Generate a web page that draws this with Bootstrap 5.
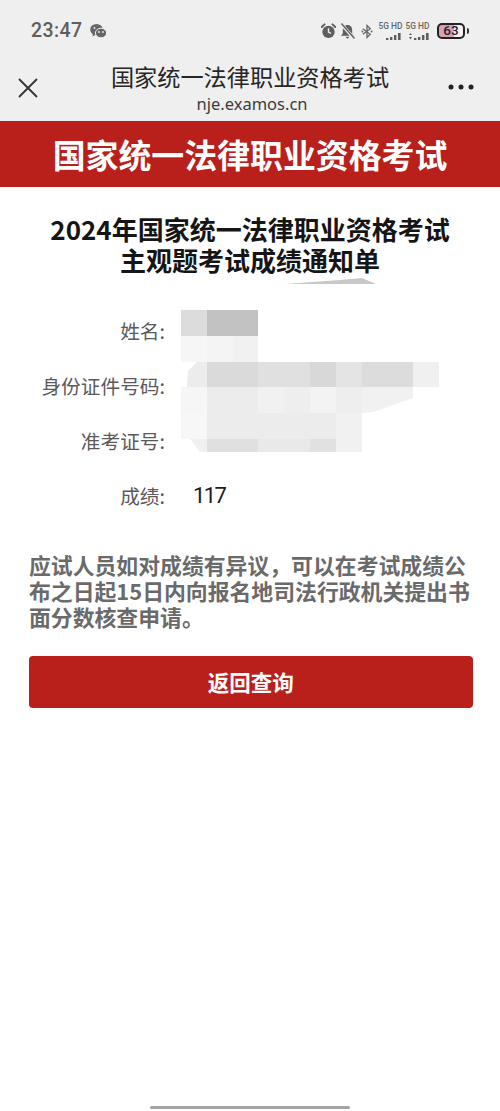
<!DOCTYPE html>
<html lang="zh-CN">
<head>
<meta charset="utf-8">
<title>国家统一法律职业资格考试</title>
<link rel="stylesheet" href="https://cdn.jsdelivr.net/npm/bootstrap@5.3.0/dist/css/bootstrap.min.css">
<style>
html,body{height:100%;}
body{width:500px;height:1111px;overflow:hidden;background:#fff;font-family:"Noto Sans CJK SC","Noto Sans",sans-serif;color:#222;}
.phone{height:1111px;}
.chrome-bg{background:#efefef;height:121px;}
.status-row{height:62px;padding:0 31px 0 31px;color:#5e5e5e;}
.clock{font-family:Roboto,sans-serif;font-size:19.5px;font-weight:500;letter-spacing:.4px;line-height:1;}
.ic-alarm{margin-right:4px;}
.ic-bt{margin-left:6px;}
.sig-label{font-family:Roboto,sans-serif;font-size:8.4px;font-weight:500;line-height:1;white-space:nowrap;color:#666;margin-bottom:3px;}
.sig-wrap{width:23px;}
.sig-first{margin-left:6px;}
.sig-next{margin-left:4px;}
.batt-wrap{margin-left:8px;}
.batt{width:28px;height:16px;border:2px solid #222;border-radius:5px;background:linear-gradient(90deg,#dd9fb2 62%,#f6eef0 62%);font-family:Roboto,sans-serif;font-size:13.5px;font-weight:500;line-height:1;color:#222;}
.batt-tip{width:2px;height:6px;background:#333;border-radius:0 2px 2px 0;margin-left:2px;}
.nav-row{height:59px;padding:0 26px 0 18px;}
.close-slot{width:34px;padding-top:16px;}
.title-one{font-size:23.2px;line-height:28px;color:#262626;}
.title-two{font-family:"Noto Sans",sans-serif;font-size:16.5px;line-height:22px;color:#3c3c3c;margin-top:3px;padding-left:4px;}
.dots-slot{width:26px;padding-top:22px;}
.banner{height:66px;background:#b9201c;color:#fff;font-size:32.9px;font-weight:700;letter-spacing:0;line-height:1;}
.doc-title{margin:26px 0 0;font-size:26px;line-height:31px;font-weight:700;color:#151515;}
.doc-title span{display:block;}
.fields{position:relative;margin-top:28px;height:220px;}
.field-row{height:55px;}
.field-label{width:165px;text-align:right;font-size:19.7px;color:#5a5a5a;line-height:1;flex:none;}
.field-value{margin-left:28px;font-family:Roboto,sans-serif;font-size:22px;letter-spacing:-1.6px;color:#1c1c1c;line-height:1;}
.mosaic{position:absolute;left:0;top:-32px;}
.notice{margin:29px 28px 0 29px;font-size:21.85px;line-height:26px;font-weight:700;color:#6a6a6a;}
.query-btn{display:block;margin:26px 27.5px 0 29px;height:52px;width:443.5px;padding:0;background:#b9201c;border:0;border-radius:4px;color:#fff;font-size:21.5px;font-weight:700;line-height:52px;}
.home-bar{position:absolute;left:150px;top:1106px;width:200px;height:3px;border-radius:2px;background:#a3a3a3;}
</style>
</head>
<body>
<div class="phone position-relative">
  <header class="chrome-bg">
    <div class="status-row d-flex align-items-center justify-content-between">
      <div class="d-flex align-items-center gap-2">
        <span class="clock">23:47</span>
        <svg width="17" height="16" viewBox="0 0 17 16"><ellipse cx="6.5" cy="6.5" rx="6.3" ry="5.5" fill="#666"/><path d="M3 10.5 2.5 13.5 6 11.5z" fill="#666"/><ellipse cx="11" cy="10" rx="5.6" ry="4.8" fill="#666" stroke="#efefef" stroke-width="1"/><circle cx="9" cy="9" r=".9" fill="#efefef"/><circle cx="13" cy="9" r=".9" fill="#efefef"/><circle cx="4.5" cy="5" r=".9" fill="#efefef"/></svg>
      </div>
      <div class="d-flex align-items-center">
        <svg class="ic-alarm" width="15" height="16" viewBox="0 0 17 17"><circle cx="8.5" cy="9.5" r="7" fill="#5e5e5e"/><path d="M8.5 5.500v4.300l2.800 1.400" stroke="#efefef" stroke-width="1.600" fill="none"/><path d="M.8 4 4 1M16.200 4 13 1" stroke="#5e5e5e" stroke-width="2.200" stroke-linecap="round"/></svg>
        <svg width="15" height="17" viewBox="0 0 16 17"><path d="M8 1.500c3.300 0 5 2.500 5 5.500v3.500l2 2.500H1l2-2.500V7c0-3 1.700-5.500 5-5.500z" fill="#5e5e5e"/><path d="M6 14.200h4L8 16.500z" fill="#5e5e5e"/><path d="M1 0 15 16" stroke="#efefef" stroke-width="3.500"/><path d="M1.500 0 15.500 16" stroke="#5e5e5e" stroke-width="1.500"/></svg>
        <svg class="ic-bt" width="12" height="15" viewBox="0 0 13 15"><path d="M2 4.500 10 10.500 6.500 14V1L10 4.500 2 10.500" stroke="#666" stroke-width="1.400" fill="none"/><circle cx="1.500" cy="7.500" r="1" fill="#666"/><circle cx="11.500" cy="7.500" r="1" fill="#666"/></svg>
        <div class="sig-wrap sig-first d-flex flex-column align-items-center">
          <span class="sig-label">5G HD</span>
          <svg width="22" height="7" viewBox="0 0 22 7"><path d="M6 5h2.400v2H6zM10 4h2.400v3H10zM14 2h2.400v5H14zM18 0h2.600v7H18z" fill="#5e5e5e"/></svg>
        </div>
        <div class="sig-wrap sig-next d-flex flex-column align-items-center">
          <span class="sig-label">5G HD</span>
          <svg width="22" height="7" viewBox="0 0 22 7"><path d="M2 2l1.500-2 1.500 2zM2 4l1.500 2.500L5 4zM7 5h2.400v2H7zM11 4h2.400v3H11zM15 2h2.400v5H15zM19 0h2.600v7H19z" fill="#5e5e5e"/></svg>
        </div>
        <div class="batt-wrap d-flex align-items-center">
          <div class="batt d-flex align-items-center justify-content-center">63</div>
          <div class="batt-tip"></div>
        </div>
      </div>
    </div>
    <div class="nav-row d-flex align-items-start justify-content-between">
      <div class="close-slot">
        <svg class="d-block" width="20" height="20" viewBox="0 0 20 20"><path d="M1 1 19 19M19 1 1 19" stroke="#333" stroke-width="1.800" fill="none"/></svg>
      </div>
      <div class="text-center">
        <div class="title-one">国家统一法律职业资格考试</div>
        <div class="title-two">nje.examos.cn</div>
      </div>
      <div class="dots-slot">
        <svg class="d-block" width="26" height="6" viewBox="0 0 26 6"><circle cx="3" cy="3" r="2.500" fill="#222"/><circle cx="13" cy="3" r="2.500" fill="#222"/><circle cx="23" cy="3" r="2.500" fill="#222"/></svg>
      </div>
    </div>
  </header>
  <div class="banner d-flex align-items-center justify-content-center">国家统一法律职业资格考试</div>
  <h1 class="doc-title text-center"><span>2024年国家统一法律职业资格考试</span><span>主观题考试成绩通知单</span></h1>
  <section class="fields">
    <div class="field-row d-flex align-items-center"><div class="field-label">姓名:</div></div>
    <div class="field-row d-flex align-items-center"><div class="field-label">身份证件号码:</div></div>
    <div class="field-row d-flex align-items-center"><div class="field-label">准考证号:</div></div>
    <div class="field-row d-flex align-items-center"><div class="field-label">成绩:</div><div class="field-value">117</div></div>
    <svg class="mosaic" width="500" height="200" viewBox="0 0 500 200">
      <g transform="translate(0,-271)">
        <path d="M285 284 340 280 362 278 376 284z" fill="#c8c8c8"/>
        <rect x="181" y="310" width="26" height="26" fill="#dcdcdc"/>
        <rect x="207" y="310" width="51" height="26" fill="#c2c2c2"/>
        <rect x="181" y="336" width="26" height="26" fill="#f6f6f6"/>
        <rect x="207" y="336" width="26" height="26" fill="#f4f4f4"/>
        <rect x="233" y="336" width="25" height="26" fill="#f1f1f1"/>
        <path d="M188 371 197 362H207V387H187z" fill="#ececec"/>
        <rect x="207" y="362" width="51" height="25" fill="#dadada"/>
        <rect x="258" y="362" width="52" height="25" fill="#e0e0e0"/>
        <rect x="310" y="362" width="26" height="25" fill="#d8d8d8"/>
        <rect x="336" y="362" width="26" height="25" fill="#e4e4e4"/>
        <rect x="362" y="362" width="51" height="25" fill="#dcdcdc"/>
        <rect x="413" y="362" width="26" height="25" fill="#f0f0f0"/>
        <path d="M181 387H207V413H181z" fill="#f6f6f6"/>
        <rect x="207" y="387" width="51" height="26" fill="#ececec"/>
        <rect x="258" y="387" width="26" height="26" fill="#f1f1f1"/>
        <rect x="284" y="387" width="26" height="26" fill="#eeeeee"/>
        <rect x="310" y="387" width="26" height="26" fill="#f3f3f3"/>
        <rect x="336" y="387" width="26" height="26" fill="#eeeeee"/>
        <path d="M362 387H413V398L373 412 362 413z" fill="#f1f1f1"/>
        <rect x="181" y="413" width="26" height="26" fill="#f7f7f7"/>
        <rect x="207" y="413" width="129" height="26" fill="#ececec"/>
        <rect x="336" y="413" width="26" height="26" fill="#f1f1f1"/>
        <path d="M190 439H207V452H200z" fill="#f0f0f0"/>
        <rect x="207" y="439" width="51" height="13" fill="#e0e0e0"/>
        <rect x="258" y="439" width="52" height="13" fill="#e9e9e9"/>
        <rect x="310" y="439" width="26" height="13" fill="#e1e1e1"/>
        <rect x="336" y="439" width="26" height="13" fill="#f1f1f1"/>
      </g>
    </svg>
  </section>
  <p class="notice">应试人员如对成绩有异议&#xFF0C;可以在考试成绩公布之日起15日内向报名地司法行政机关提出书面分数核查申请。</p>
  <button type="button" class="btn query-btn">返回查询</button>
  <div class="home-bar"></div>
</div>
<script src="https://cdn.jsdelivr.net/npm/bootstrap@5.3.0/dist/js/bootstrap.bundle.min.js"></script>
</body>
</html>
